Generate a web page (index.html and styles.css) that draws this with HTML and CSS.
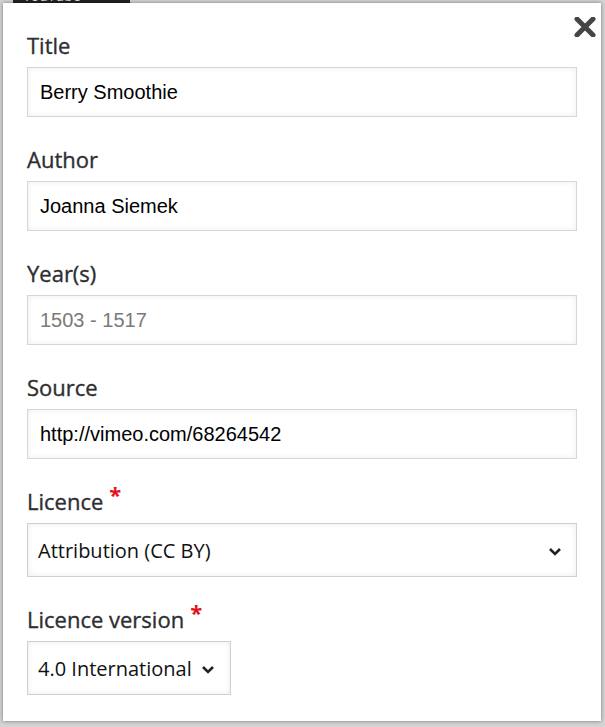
FILE: index.html
```html
<!DOCTYPE html>
<html>
<head>
<meta charset="utf-8">
<link rel="stylesheet" href="styles.css">
</head>
<body>
<div class="backdrop-tab">YouTube</div>
<div class="popup">
  <button class="close" aria-label="Close">
    <svg width="22" height="20" viewBox="0 0 22 20"><path d="M3 2 L19 18 M19 2 L3 18" stroke="#454545" stroke-width="5" stroke-linecap="round" fill="none"/></svg>
  </button>
  <div class="field">
    <div class="label">Title</div>
    <div class="input">Berry Smoothie</div>
  </div>
  <div class="field">
    <div class="label">Author</div>
    <div class="input">Joanna Siemek</div>
  </div>
  <div class="field">
    <div class="label">Year(s)</div>
    <div class="input placeholder">1503 - 1517</div>
  </div>
  <div class="field">
    <div class="label">Source</div>
    <div class="input">http://vimeo.com/68264542</div>
  </div>
  <div class="field">
    <div class="label">Licence<span class="req">*</span></div>
    <div class="select">
      <span>Attribution (CC BY)</span>
      <svg class="chev" width="14" height="9" viewBox="0 0 14 9"><path d="M2 2 L7 7 L12 2" stroke="#222" stroke-width="2.6" fill="none"/></svg>
    </div>
  </div>
  <div class="field">
    <div class="label">Licence version<span class="req">*</span></div>
    <div class="select small">
      <span>4.0 International</span>
      <svg class="chev" width="14" height="9" viewBox="0 0 14 9"><path d="M2 2 L7 7 L12 2" stroke="#222" stroke-width="2.6" fill="none"/></svg>
    </div>
  </div>
</div>
</body>
</html>
```

FILE: styles.css
```css
html, body {
  margin: 0;
  padding: 0;
}
body {
  background: #d4d4d4;
  width: 605px;
  height: 727px;
  overflow: hidden;
  position: relative;
  font-family: "Open Sans", "Liberation Sans", sans-serif;
}
.backdrop-tab {
  position: absolute;
  left: 13px;
  top: -12px;
  width: 117px;
  height: 15px;
  background: #222;
  color: #ddd;
  font-size: 14px;
  line-height: 16px;
  padding-left: 10px;
  box-sizing: border-box;
}
.popup {
  position: absolute;
  left: 3px;
  top: 3px;
  width: 598px;
  height: 718px;
  background: #fff;
  box-sizing: border-box;
  padding: 27px 0 0 24px;
  box-shadow: 0 0 4px rgba(0,0,0,0.45);
}
.close {
  position: absolute;
  right: 3px;
  top: 12px;
  width: 26px;
  height: 24px;
  border: 0;
  background: none;
  padding: 0;
  display: flex;
  align-items: center;
  justify-content: center;
}
.field {
  margin-bottom: 27px;
}
.label {
  font-family: "Open Sans", sans-serif;
  font-size: 22px;
  font-weight: 400;
  line-height: 30px;
  height: 30px;
  color: #2e2e31;
  -webkit-text-stroke: 0.35px #2e2e31;
  margin-bottom: 7px;
}
.req {
  color: #e3101b;
  -webkit-text-stroke: 0;
  font-size: 22px;
  position: relative;
  top: -7px;
  margin-left: 6px;
  font-weight: 700;
}
.input {
  width: 550px;
  height: 50px;
  box-sizing: border-box;
  border: 1px solid #d6d6d6;
  box-shadow: inset 0 0 6px rgba(0,0,0,0.07);
  padding-left: 12px;
  display: flex;
  align-items: center;
  font-family: "Liberation Sans", Arial, sans-serif;
  font-size: 20px;
  color: #000;
}
.input.placeholder {
  color: #7a7a7a;
}
.select {
  width: 550px;
  height: 54px;
  box-sizing: border-box;
  border: 1px solid #d0d0d0;
  background: #fff;
  box-shadow: inset 0 0 6px rgba(0,0,0,0.08);
  padding: 0 14px 0 10px;
  display: flex;
  align-items: center;
  justify-content: space-between;
  font-family: "Open Sans", sans-serif;
  font-size: 20px;
  color: #111;
}
.select.small {
  width: 204px;
  padding-right: 15px;
}
.chev {
  display: block;
  margin-top: 2px;
}
```
